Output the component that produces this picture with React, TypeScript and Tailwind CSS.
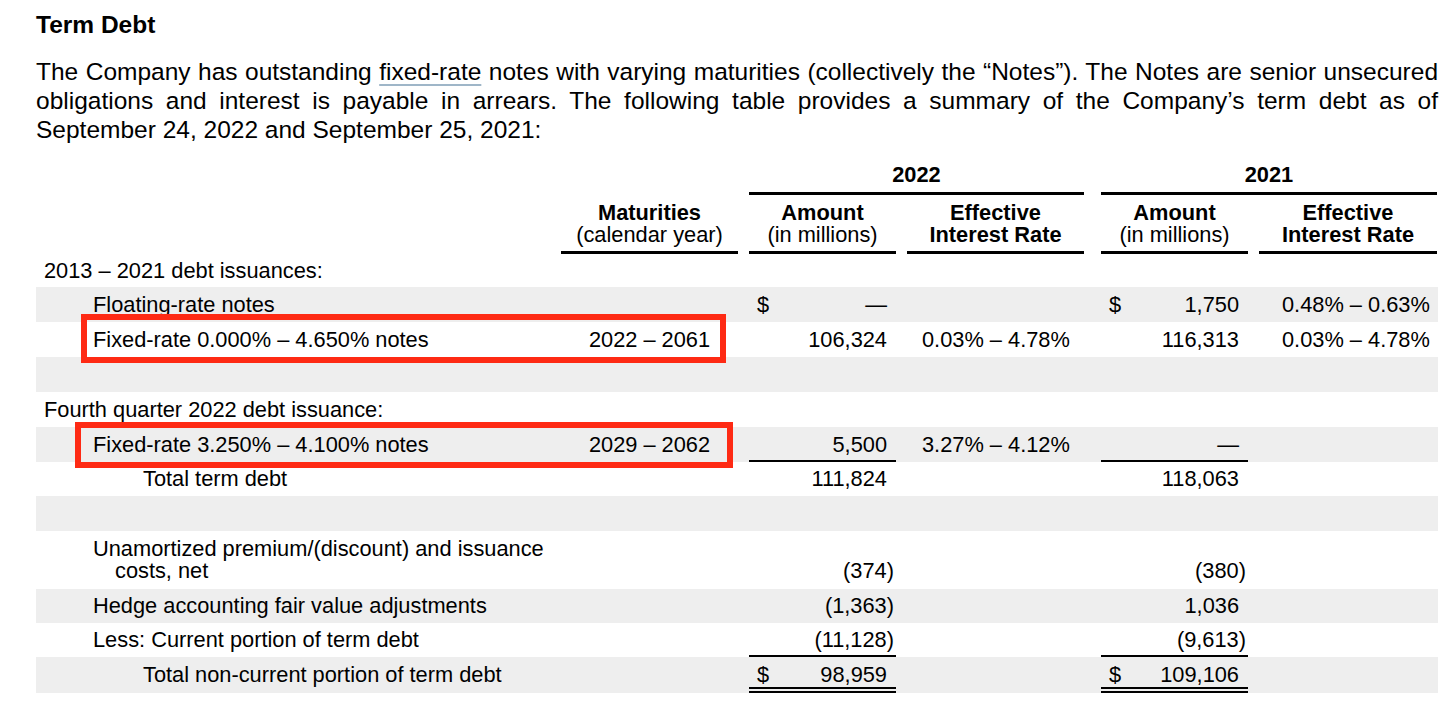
import React from 'react';
import clsx from 'clsx';

type Amount = { v: string; dollar?: boolean; line?: 'single' | 'double'; low?: boolean };

type RowProps = {
  h: string;
  gray?: boolean;
  indent?: string;
  label?: React.ReactNode;
  mat?: string;
  a22?: Amount;
  e22?: string;
  a21?: Amount;
  e21?: string;
};

const AmountCell: React.FC<{ amt?: Amount }> = ({ amt }) => {
  const neg = amt?.v.endsWith(')');
  return (
    <div
      className={clsx(
        'flex h-full w-[147px] shrink-0 justify-between pl-[8px]',
        amt?.low ? 'items-end pb-[7px]' : 'items-center',
        neg ? 'pr-[2px]' : 'pr-[9px]',
        amt?.line === 'single' && 'border-b-2 border-black pt-[2px]',
        amt?.line === 'double' && 'border-b-[6px] border-double border-black pt-[6px]'
      )}
    >
      <span>{amt?.dollar ? '$' : ''}</span>
      <span>{amt?.v}</span>
    </div>
  );
};

const Row: React.FC<RowProps> = ({ h, gray, indent, label, mat, a22, e22, a21, e21 }) => (
  <div className={clsx('flex items-center whitespace-nowrap', h, gray && 'bg-[#eeeeee]')}>
    <div className={clsx('w-[525px] shrink-0', indent)}>{label}</div>
    <div className="w-[177px] shrink-0 text-center">{mat}</div>
    <div className="ml-[11px] h-full">
      <AmountCell amt={a22} />
    </div>
    <div className="ml-[11px] w-[177px] shrink-0 pl-[15px]">{e22}</div>
    <div className="ml-[17px] h-full">
      <AmountCell amt={a21} />
    </div>
    <div className="ml-[11px] w-[178px] shrink-0 pl-[23px]">{e21}</div>
  </div>
);

export default function App() {
  return (
    <div className="relative min-h-[710px] w-[1456px] bg-white pl-[36px] pt-[10px] font-['Liberation_Sans',Arial,sans-serif] text-black">
      <div className="w-[1402px]">
        <h2 className="text-[24.5px] font-bold leading-[29px]">Term Debt</h2>
        <p className="mt-[18px] text-[24.5px] leading-[29px]">
          <span className="block text-justify [text-align-last:justify]">
            The Company has outstanding{' '}
            <span className="underline decoration-[#9fb6c8] decoration-[1.5px] underline-offset-[4px]">fixed-rate</span>{' '}
            notes with varying maturities (collectively the “Notes”). The Notes are senior unsecured
          </span>
          <span className="block text-justify [text-align-last:justify]">
            obligations and interest is payable in arrears. The following table provides a summary of the Company’s term debt as of
          </span>
          <span className="block">September 24, 2022 and September 25, 2021:</span>
        </p>

        <div className="mt-[18px] text-[21.8px] leading-[22px]">
          {/* year headers */}
          <div className="flex h-[33px] font-bold">
            <div className="w-[702px] shrink-0" />
            <div className="ml-[11px] w-[335px] shrink-0 border-b-[3px] border-black text-center leading-[26px]">2022</div>
            <div className="ml-[17px] w-[336px] shrink-0 border-b-[3px] border-black text-center leading-[26px]">2021</div>
          </div>
          {/* column headers */}
          <div className="flex">
            <div className="w-[525px] shrink-0" />
            <div className="w-[177px] shrink-0 border-b-[3px] border-black pb-[5px] pt-[7px] text-center">
              <div className="font-bold">Maturities</div>
              <div>(calendar year)</div>
            </div>
            <div className="ml-[11px] w-[147px] shrink-0 border-b-[3px] border-black pb-[5px] pt-[7px] text-center">
              <div className="font-bold">Amount</div>
              <div>(in millions)</div>
            </div>
            <div className="ml-[11px] w-[177px] shrink-0 border-b-[3px] border-black pb-[5px] pt-[7px] text-center font-bold">
              <div>Effective</div>
              <div>Interest Rate</div>
            </div>
            <div className="ml-[17px] w-[147px] shrink-0 border-b-[3px] border-black pb-[5px] pt-[7px] text-center">
              <div className="font-bold">Amount</div>
              <div>(in millions)</div>
            </div>
            <div className="ml-[11px] w-[178px] shrink-0 border-b-[3px] border-black pb-[5px] pt-[7px] text-center font-bold">
              <div>Effective</div>
              <div>Interest Rate</div>
            </div>
          </div>

          <Row h="h-[33px]" indent="pl-[8px]" label="2013 – 2021 debt issuances:" />
          <Row
            h="h-[35px]"
            gray
            indent="pl-[57px]"
            label="Floating-rate notes"
            a22={{ v: '—', dollar: true }}
            a21={{ v: '1,750', dollar: true }}
            e21="0.48% – 0.63%"
          />
          <Row
            h="h-[35px]"
            indent="pl-[57px]"
            label="Fixed-rate 0.000% – 4.650% notes"
            mat="2022 – 2061"
            a22={{ v: '106,324' }}
            e22="0.03% – 4.78%"
            a21={{ v: '116,313' }}
            e21="0.03% – 4.78%"
          />
          <Row h="h-[35px]" gray />
          <Row h="h-[35px]" indent="pl-[8px]" label="Fourth quarter 2022 debt issuance:" />
          <Row
            h="h-[35px]"
            gray
            indent="pl-[57px]"
            label="Fixed-rate 3.250% – 4.100% notes"
            mat="2029 – 2062"
            a22={{ v: '5,500', line: 'single' }}
            e22="3.27% – 4.12%"
            a21={{ v: '—', line: 'single' }}
          />
          <Row h="h-[34px]" indent="pl-[107px]" label="Total term debt" a22={{ v: '111,824' }} a21={{ v: '118,063' }} />
          <Row h="h-[35px]" gray />
          <Row
            h="h-[58px]"
            indent="pl-[79px] -indent-[22px]"
            label={
              <>
                Unamortized premium/(discount) and issuance
                <br />
                costs, net
              </>
            }
            a22={{ v: '(374)', low: true }}
            a21={{ v: '(380)', low: true }}
          />
          <Row
            h="h-[34px]"
            gray
            indent="pl-[57px]"
            label="Hedge accounting fair value adjustments"
            a22={{ v: '(1,363)' }}
            a21={{ v: '1,036' }}
          />
          <Row
            h="h-[34px]"
            indent="pl-[57px]"
            label="Less: Current portion of term debt"
            a22={{ v: '(11,128)', line: 'single' }}
            a21={{ v: '(9,613)', line: 'single' }}
          />
          <Row
            h="h-[36px]"
            gray
            indent="pl-[107px]"
            label="Total non-current portion of term debt"
            a22={{ v: '98,959', dollar: true, line: 'double' }}
            a21={{ v: '109,106', dollar: true, line: 'double' }}
          />
        </div>
      </div>

      {/* highlight annotations */}
      <div className="absolute left-[81px] top-[314px] h-[49px] w-[645px] border-[6px] border-[#fe2a14]" />
      <div className="absolute left-[75px] top-[422px] h-[46px] w-[658px] border-[6px] border-[#fe2a14]" />
    </div>
  );
}
